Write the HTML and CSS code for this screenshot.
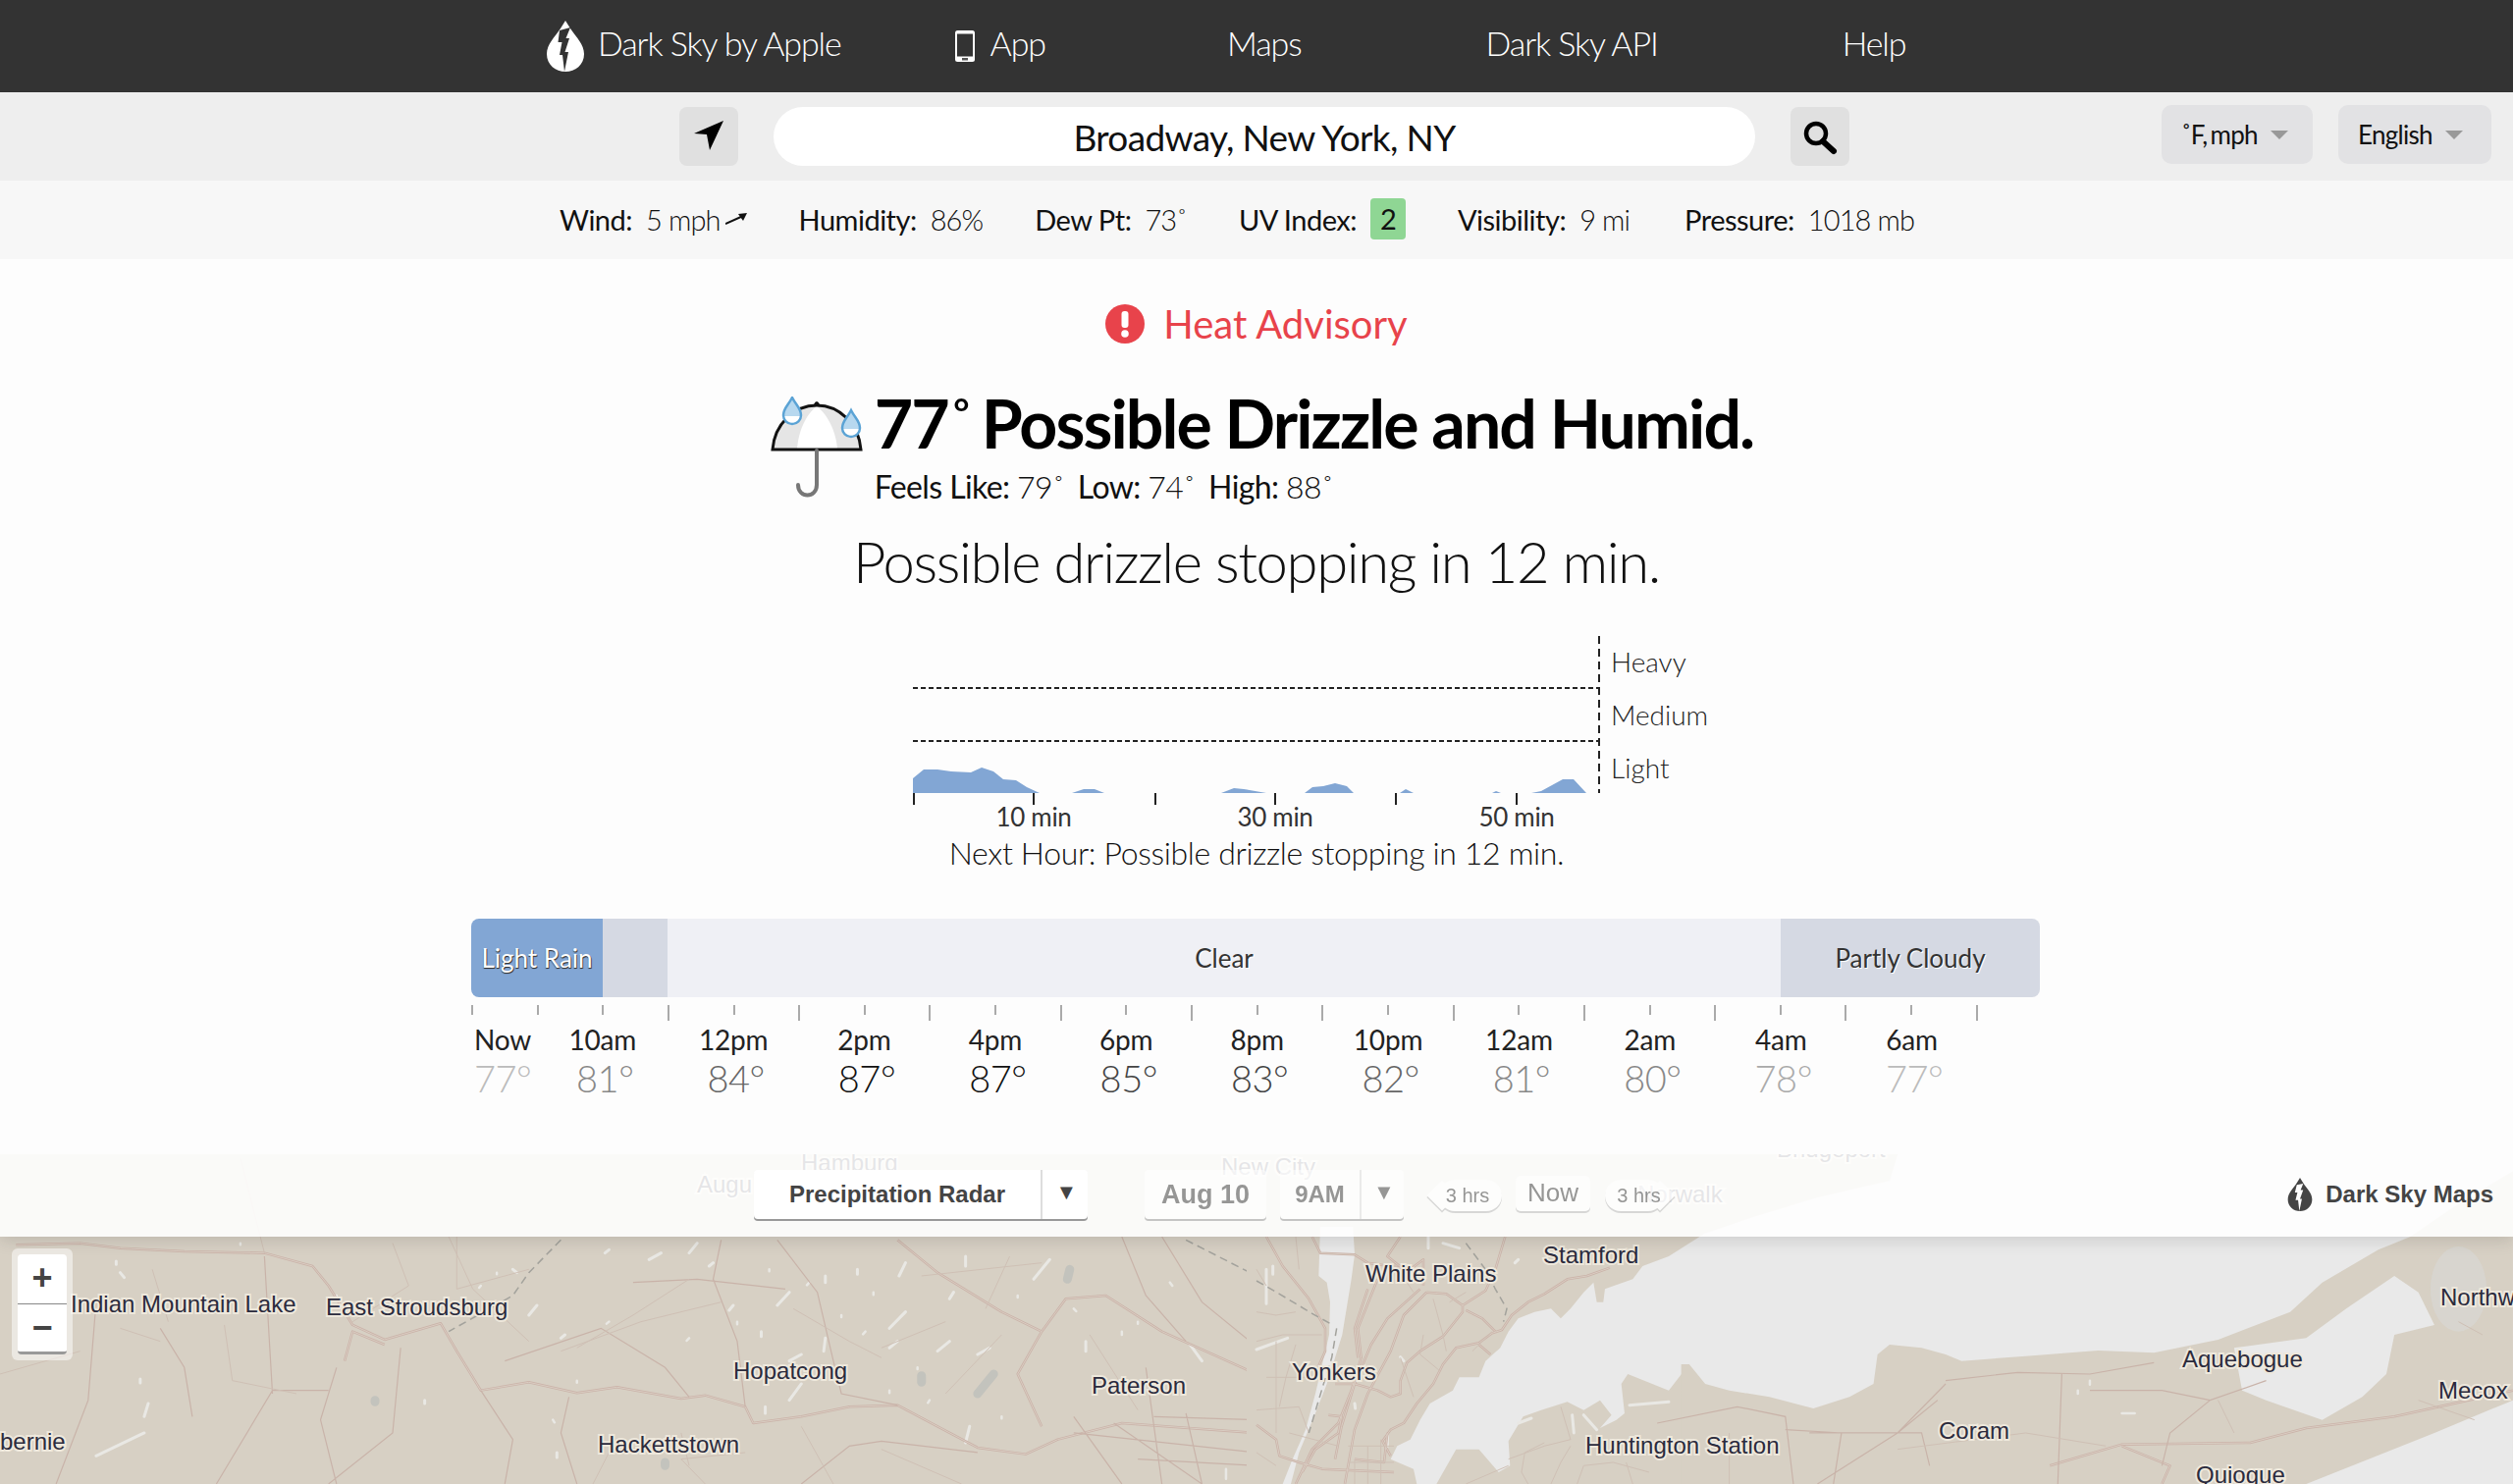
FILE: index.html
```html
<!DOCTYPE html>
<html lang="en">

<head>
  <meta charset="UTF-8">
  <meta name="viewport" content="width=device-width, initial-scale=1.0">
  <title>Dark Sky - Broadway, New York, NY</title>
  <link rel="stylesheet" href="styles.css">
</head>

<body>
  <nav class="topnav">
    <a class="nav-logo">
      <svg class="logo-drop" viewBox="0 0 40 54">
        <path d="M20 1 L25 9 C31 18 39 25 39 35 C39 46 30 53 20 53 C10 53 1 46 1 35 C1 25 9 18 15 9 Z" fill="#fff" />
        <path d="M14 11 L25 8 L20.500 19 L24 19 L19.500 33 L23 33 L19 53 L17 36 L14 36 L16.500 23 L12.500 23 Z" fill="#333" />
      </svg>
      Dark Sky by Apple
    </a>
    <a class="nav-app">
      <svg class="phone" viewBox="0 0 20 32">
        <rect x="0" y="0" width="20" height="32" rx="2.5" fill="#fff" />
        <rect x="2" y="3.5" width="16" height="23" fill="#333" />
        <rect x="7" y="28" width="6" height="2.5" fill="#555" />
      </svg>
      App
    </a>
    <a>Maps</a>
    <a>Dark Sky API</a>
    <a>Help</a>
  </nav>

  <div class="searchbar">
    <button class="icon-btn locate">
      <svg viewBox="0 0 60 60" width="60" height="60">
        <path d="M45 14 L31 44 L28 28 L15 27 Z" fill="#000" />
      </svg>
    </button>
    <div class="location">Broadway, New York, NY</div>
    <button class="icon-btn search">
      <svg viewBox="0 0 60 60" width="60" height="60">
        <circle cx="26" cy="27" r="10" fill="none" stroke="#000" stroke-width="4.5" />
        <path d="M33 35 L44 45" stroke="#000" stroke-width="6" stroke-linecap="round" />
      </svg>
    </button>
    <div class="select-pill units">˚F, mph <span class="caret"></span></div>
    <div class="select-pill lang">English <span class="caret"></span></div>
  </div>

  <div class="stats">
    <div class="stat"><b>Wind:</b> <span>5 mph</span>
      <svg class="wind-arrow" viewBox="0 0 22 12" width="22" height="12">
        <path d="M0 11 L18 3" stroke="#111" stroke-width="2" />
        <path d="M22 0 L13 1 L18 8 Z" fill="#111" />
      </svg>
    </div>
    <div class="stat"><b>Humidity:</b> <span>86%</span></div>
    <div class="stat"><b>Dew Pt:</b> <span>73˚</span></div>
    <div class="stat"><b>UV Index:</b> <span class="uv">2</span></div>
    <div class="stat"><b>Visibility:</b> <span>9 mi</span></div>
    <div class="stat"><b>Pressure:</b> <span>1018 mb</span></div>
  </div>

  <main class="forecast">
    <div class="alert">
      <svg class="alert-icon" viewBox="0 0 40 40">
        <circle cx="20" cy="20" r="20" fill="#e8434b" />
        <rect x="16.5" y="7" width="7" height="17" rx="3" fill="#fff" />
        <circle cx="20" cy="30" r="3.8" fill="#fff" />
      </svg>
      <span>Heat Advisory</span>
    </div>

    <div class="current">
      <svg class="umbrella" viewBox="0 0 94 104">
        <path d="M2 54 C4 28 24 9 47 9 C70 9 90 28 92 54 Z" fill="#e5e5e5" />
        <path d="M27 54 C28 36 36 18 47 10 C58 18 67 36 68 54 Z" fill="#fff" />
        <path d="M2 54 C4 28 24 9 47 9 C70 9 90 28 92 54 Z" fill="none" stroke="#111" stroke-width="3" />
        <path d="M44 8 Q47 2 50 8 Z" fill="#111" />
        <path d="M47 55 L47 90 C47 104 28 104 28 90" fill="none" stroke="#777" stroke-width="4" stroke-linecap="round" />
        <path d="M22 1 C26 9 31 12 31 19 C31 24 27 28 22 28 C17 28 13 24 13 19 C13 12 18 9 22 1 Z" fill="#b7d8ef" stroke="#5ba3d5" stroke-width="2.5" />
        <path d="M14.5 20 H29.5 C29 24 26 26.5 22 26.5 C18 26.5 15 24 14.5 20 Z" fill="#fff" />
        <path d="M82 14 C86 22 91 25 91 32 C91 37 87 41 82 41 C77 41 73 37 73 32 C73 25 78 22 82 14 Z" fill="#b7d8ef" stroke="#5ba3d5" stroke-width="2.5" />
        <path d="M74.500 33 H89.500 C89 37 86 39.500 82 39.500 C78 39.500 75 37 74.500 33 Z" fill="#fff" />
      </svg>
      <div class="current-text">
        <h1><span class="temp">77<i>˚</i> </span>Possible Drizzle and Humid.</h1>
        <div class="feels">
          <b>Feels Like:</b> <span>79˚</span>
          <b>Low:</b> <span>74˚</span>
          <b>High:</b> <span>88˚</span>
        </div>
      </div>
    </div>

    <h2 class="next-summary">Possible drizzle stopping in 12 min.</h2>

    <svg class="rain-chart" viewBox="930 648 800 195" width="800" height="195">
      <path class="rain" d="M930 793 L941 784 L955 784 L969 786 L989 787 L1000 782 L1012 786 L1022 794 L1035 795 L1046 802 L1059 808 L930 808 Z" />
      <path class="rain" d="M1092 808 L1104 804 L1115 804 L1125 808 Z" />
      <path class="rain" d="M1244 808 L1257 803 L1267 804 L1290 808 Z" />
      <path class="rain" d="M1329 808 L1337 802 L1348 801 L1360 798 L1372 801 L1379 808 Z" />
      <path class="rain" d="M1426 808 L1432 804 L1440 808 Z" />
      <path class="rain" d="M1520 808 L1524 806 L1529 808 Z" />
      <path class="rain" d="M1560 808 L1570 806 L1592 794 L1603 794 L1616 808 Z" />
      <path class="dash" d="M930 701 H1629 M930 755 H1629" />
      <path class="dash vert" d="M1629 648 V808" />
      <path class="tick" d="M931 808 V820 M1053 808 V820 M1177 808 V820 M1299 808 V820 M1422 808 V820 M1545 808 V820" />
      <text class="level" x="1641" y="685">Heavy</text>
      <text class="level" x="1641" y="739">Medium</text>
      <text class="level" x="1641" y="793">Light</text>
      <text class="mins" x="1053" y="842">10 min</text>
      <text class="mins" x="1299" y="842">30 min</text>
      <text class="mins" x="1545" y="842">50 min</text>
    </svg>
    <p class="next-hour">Next Hour: Possible drizzle stopping in 12 min.</p>

    <div class="timeline">
      <div class="bar">
        <div class="seg rain-seg">Light Rain</div>
        <div class="seg cloud-seg drizzle-seg"></div>
        <div class="seg clear-seg">Clear</div>
        <div class="seg cloud-seg partly-seg">Partly Cloudy</div>
      </div>
      <div class="ticks">
        <i></i><i></i><i></i>
        <i class="long"></i><i></i><i class="long"></i><i></i><i class="long"></i><i></i><i class="long"></i><i></i>
        <i class="long"></i><i></i><i class="long"></i><i></i><i class="long"></i><i></i><i class="long"></i><i></i>
        <i class="long"></i><i></i><i class="long"></i><i></i><i class="long"></i>
      </div>
      <div class="hours">
        <div class="hour first"><b>Now</b><span class="t1">77°</span></div>
        <div class="hour"><b>10am</b><span class="t3">81°</span></div>
        <div class="hour"><b>12pm</b><span class="t4">84°</span></div>
        <div class="hour"><b>2pm</b><span class="t6">87°</span></div>
        <div class="hour"><b>4pm</b><span class="t6">87°</span></div>
        <div class="hour"><b>6pm</b><span class="t5">85°</span></div>
        <div class="hour"><b>8pm</b><span class="t5">83°</span></div>
        <div class="hour"><b>10pm</b><span class="t4">82°</span></div>
        <div class="hour"><b>12am</b><span class="t3">81°</span></div>
        <div class="hour"><b>2am</b><span class="t3">80°</span></div>
        <div class="hour"><b>4am</b><span class="t2">78°</span></div>
        <div class="hour"><b>6am</b><span class="t1">77°</span></div>
      </div>
    </div>
  </main>

  <section class="map">
    <svg class="map-canvas" viewBox="0 1176 2560 336" width="2560" height="336">
      <defs>
        <path id="roads-west" d="M20 325 L100 320 L150 335 L230 345 L330 350 L390 390 L410 450 L440 570 L480 615 L550 565 L570 650 L600 770 L660 745 L720 778 L770 760 L850 795 L880 785 L930 820 L940 870 L1000 850 L1060 820 L1120 815 L1170 880 L1220 945 L1280 965 L1320 920 L1400 870 L1568 900 M430 680 L440 590 L480 630 M1120 310 L1170 410 L1250 530 L1300 590 L1270 720 L1300 880 M1300 590 L1330 490 L1380 480 L1450 590 L1568 720" />
        <path id="roads-sound" d="M170 0 L195 50 L300 55 L340 80 L470 100 L510 70 L510 150 M520 170 L580 175 L630 210 L630 230 L570 305 L500 350 L460 385 L440 440 L440 480 L410 490 L370 470 L300 450 L240 450 M1080 95 L1010 120 L950 130 L880 175 L830 200 L780 240 L750 285 L720 295 L680 325 L610 340 L570 390 L540 450 L490 510 L450 570 L410 590 L385 625 L410 670 M630 210 L700 165 L730 100 L760 0 M640 225 L690 250 L730 290 M680 330 L715 360 M520 170 L450 240 L410 350 L340 480 L300 590 L270 756 M500 160 L400 250 L350 330 L300 450 L260 580 L240 680 M370 130 L310 280 L320 370 L290 470 L250 570 L170 650 L120 756 M340 160 L300 280 L310 370 M30 0 L80 90 L160 190 L210 280 L210 350 L170 440 M0 575 L60 620 L70 670 L130 690 L200 710 L300 715 L420 720 M220 545 L260 550 L250 600 L180 650 L140 720 M300 680 L390 690 L400 600 M440 0 L400 60 L450 100" />
        <path id="roads-island" d="M990 1000 L1080 935 L1240 930 L1310 885 L1420 850 L1568 770 M1080 940 L1140 1000 L1130 1056" />
      </defs>

      <rect class="water" x="0" y="1176" width="2560" height="336" />
      <rect class="land" x="0" y="1176" width="1290" height="336" />

      <!-- left part of the map -->
      <g transform="translate(0 1160) scale(.8163 .3333)">
        <path class="lake" d="M825 350 l-15 20 M1130 380 l-8 40 M985 470 l-15 40 M1130 530 l-20 50 M1355 620 l0 30 M1210 880 l-5 50 M955 820 l0 20 M1000 750 l-15 50 M175 735 l0 12 M185 810 l-5 40 M180 900 l-60 70 M1030 420 l0 20 M1205 360 l0 30 M1310 370 l-20 60 M1190 470 l-5 20 M1110 640 l10 -20 M1170 650 l15 -30 M1030 610 l-2 40 M1000 660 l-15 20 M1220 660 l15 -20 M150 410 l5 15 M145 375 l0 10 M760 340 l-5 10 M870 320 l-10 30 M640 400 l5 10 M700 610 l5 -10 M670 510 l-10 30 M530 800 l0 10 M695 960 l0 15 M915 510 l-5 15 M950 590 l0 15 M1070 400 l0 15 M890 380 l-5 10 M1500 680 l-15 -50" />
        <path class="lake small" d="M1090 470 l0 8 M1010 440 l-3 8 M960 400 l0 6 M920 560 l0 8 M860 610 l-3 8 M1050 540 l0 6 M1080 590 l-3 8 M1145 700 l0 5 M1270 480 l0 6 M1340 520 l3 8 M1400 590 l0 10 M1460 440 l3 10 M1420 560 l0 6 M760 560 l-3 6 M620 410 l0 5 M600 450 l-2 6 M720 740 l0 6 M690 860 l2 8 M1110 770 l0 8 M1160 800 l-2 8 M1250 850 l0 6 M1530 1010 l0 30 M300 320 l0 5 M420 480 l0 5" />
        <path class="lake grey" d="M1335 400 l-3 30 M1240 720 l-20 60 M1150 725 l0 20 M468 800 l0 5 M830 990 l0 10" />
        <use class="road-case" href="#roads-west" />
        <use class="road-core" href="#roads-west" />
        <path class="road" d="M420 700 L400 860 L420 1056 M600 770 L640 920 L630 1056 M970 310 L1020 470 L1040 680 L1050 780 L1120 815 M900 310 L890 430 L920 620 L930 820 M1000 1056 L1060 940 L1100 925 L1220 960 M120 500 L110 800 L70 1056 M200 580 L230 700 L240 850 M330 360 L340 780 M270 1056 L340 770 L410 770 M630 680 L750 580 L830 700 L860 790 M790 440 L870 430 L980 460 M500 640 L490 900 L410 1056 M710 790 L700 900 L720 1056 M1340 850 L1400 1056 M1430 700 L1450 1056 M1480 840 L1500 1056 M1400 300 L1430 480 L1480 620 M1450 300 L1500 500 L1560 620 M1340 900 L1568 960 M1390 870 L1500 1056 M1420 980 L1568 1000 M1440 850 L1568 860" />
        <path class="road thin" d="M300 60 L330 350 M570 300 L570 460 L660 400 M700 650 L800 560 L900 500 M990 520 L1060 620 L1100 670 M150 580 L200 620 M1150 420 L1300 380 M1250 600 L1180 780 M850 900 L860 1000 M1100 950 L1200 1056 M100 650 L0 720 M1360 600 L1420 830 M490 320 L510 450 L440 560 M190 400 L210 560 M280 570 L290 740 L370 780 M720 640 L790 540 L860 430 M1000 880 L1040 1056 M880 1056 L850 980 L930 960 M1260 360 L1230 520 M560 300 L590 460 L660 620 M1180 560 L1100 640 M740 1056 L760 960 L850 920" />
        <path class="border" d="M700 310 L660 410 L640 480 L560 590" />
        <path class="border" d="M1480 310 L1568 420" />
      </g>

      <!-- sound and hudson, traced at 3x from the top left of this group -->
      <g transform="translate(1280 1260) scale(.3333)">
        <path class="land" d="M-30 -252 L1960 -252 L1935 -171 L1714 -120 L1518 -60 L1370 -10 L1260 60 L1180 90 L1150 130 L1065 160 L1060 200 L1040 200 L1030 140 L1000 170 L960 220 L930 250 L900 220 L850 230 L800 250 L770 290 L745 340 L700 380 L680 430 L620 430 L600 470 L530 510 L500 560 L470 620 L430 640 L410 680 L480 710 L490 756 L-30 756 Z" />
        <path class="land" d="M550 756 L610 650 L680 650 L740 720 L775 700 L770 625 L815 550 L870 530 L950 505 L1000 530 L1050 500 L1085 545 L1050 585 L1100 560 L1125 540 L1115 450 L1135 420 L1260 470 L1322 390 L1322 756 Z" />
        <path class="water" d="M195 -30 L295 -30 L300 55 L290 130 L262 300 L215 450 L180 540 L130 660 L105 756 L80 756 L110 680 L150 590 L180 480 L222 300 L225 200 L215 140 L190 120 Z" />
        <path class="lake" d="M30 100 L30 205 M50 90 L50 115 M0 345 L95 310 M525 0 L525 35 M570 20 L620 35 M300 510 L302 525 M400 610 L400 640 M440 368 L450 380 M965 545 L970 600 M1000 545 L1040 590 M1140 515 L1260 505 M800 570 L840 555 M800 70 L790 80" />
        <use class="road-case" href="#roads-sound" />
        <use class="road-core" href="#roads-sound" />
        <path class="road thin" d="M0 230 L60 240 L120 230 M30 430 L170 430 M60 320 L60 600 M0 530 L130 520 L160 600 M0 320 L80 300 L200 300 M120 0 L130 100 M540 190 L570 300 L580 350 M480 490 L440 370 M510 300 L500 360 L560 410 M660 350 L720 290 M280 640 L420 640 M300 680 L300 756 M340 640 L340 756 M380 620 L380 756 M280 690 L420 690 M100 600 L250 640 M0 660 L60 700 M480 170 L420 80 M590 200 L640 170 M880 630 L820 660 L810 720 L830 756 M770 680 L880 640 L960 620 L930 520 M960 640 L930 690 L900 756 M1000 700 L1090 690 L1200 720 M1200 640 L1260 620 M640 756 L770 700 M1000 700 L980 756 M1130 690 L1150 756 M0 100 L30 150 M120 330 L90 430 L70 520" />
        <path class="border" d="M0 135 L70 175 L170 235 L230 268 M245 280 L230 370 L205 450 L175 550 L160 600 M640 20 L700 100 L730 160 L765 220 L755 260" />
      </g>

      <!-- long island, forks and the top of the map to the east -->
      <g transform="translate(1280 1160) scale(.8163 .3333)">
        <path class="land" d="M530 690 L540 690 L560 750 L590 770 L640 790 L695 825 L740 790 L770 750 L775 660 L790 630 L830 640 L860 660 L880 680 L960 665 L1050 648 L1120 655 L1200 615 L1290 530 L1330 440 L1400 340 L1440 300 L1470 250 L1500 200 L1568 100 L1568 1056 L530 1056 Z" />
        <path class="water" d="M1220 640 L1310 610 L1360 520 L1420 420 L1450 470 L1470 570 L1420 600 L1410 720 L1380 790 L1330 860 L1260 800 L1230 770 Z" />
        <path class="water" d="M1310 1056 L1470 900 L1568 800 L1568 1056 Z" />
        <ellipse class="haze" cx="1500" cy="460" rx="35" ry="130" />
        <use class="road-case" href="#roads-island" />
        <use class="road-core" href="#roads-island" />
        <path class="road" d="M860 740 L950 715 L1040 720 L1120 685 M1005 720 L1000 1056 M850 800 L800 900 L830 900 L840 1000 M690 900 L800 900 M1190 800 L1140 900 L1130 1000 M500 870 L600 820 L660 850 L670 1056 M660 890 L730 900 L720 1056 M860 750 L800 900 L700 1056 M1040 770 L1130 770 L1190 800 L1260 740" />
        <path class="road thin" d="M800 950 L960 900 L1060 940 M590 1056 L590 900 M1200 800 L1220 900 M1500 560 L1530 600 M1450 800 L1520 860" />
        <path class="lake small" d="M1040 740 l0 12 M1080 840 l16 0 M1025 770 l0 10 M1500 500 l0 8" />
      </g>

      <g class="labels">
        <text x="816" y="1193" class="under">Hamburg</text>
        <text x="710" y="1215" class="under">Augu</text>
        <text x="1244" y="1197" class="under">New City</text>
        <text x="1810" y="1179" class="under">Bridgeport</text>
        <text x="1668" y="1225" class="under">Norwalk</text>
        <text x="72" y="1337">Indian Mountain Lake</text>
        <text x="332" y="1340">East Stroudsburg</text>
        <text x="747" y="1405">Hopatcong</text>
        <text x="1112" y="1420">Paterson</text>
        <text x="609" y="1480">Hackettstown</text>
        <text x="0" y="1477">bernie</text>
        <text x="1572" y="1287">Stamford</text>
        <text x="1391" y="1306">White Plains</text>
        <text x="1316" y="1406">Yonkers</text>
        <text x="2223" y="1393">Aquebogue</text>
        <text x="2486" y="1330">Northw</text>
        <text x="2484" y="1425">Mecox</text>
        <text x="1975" y="1466">Coram</text>
        <text x="1615" y="1481">Huntington Station</text>
        <text x="2237" y="1511">Quiogue</text>
      </g>
    </svg>

    <div class="map-bar">
      <div class="map-select layer">
        <span class="select-text">Precipitation Radar</span>
        <span class="select-arrow">▼</span>
      </div>
      <div class="time-controls">
        <div class="map-select date"><span class="select-text">Aug 10</span></div>
        <div class="map-select clock">
          <span class="select-text">9AM</span>
          <span class="select-arrow">▼</span>
        </div>
        <div class="step back">3 hrs</div>
        <div class="step now">Now</div>
        <div class="step forward">3 hrs</div>
      </div>
      <div class="map-brand">
        <svg class="brand-drop" viewBox="0 0 40 54">
          <path d="M20 1 L25 9 C31 18 39 25 39 35 C39 46 30 53 20 53 C10 53 1 46 1 35 C1 25 9 18 15 9 Z" fill="#444" />
          <path d="M15 12 L25 10 L21 20 L25 20 L20 34 L23 34 L19 53 L17 36 L13 36 L16 24 L12 24 Z" fill="#fff" />
        </svg>
        Dark Sky Maps
      </div>
    </div>

    <div class="zoom-box">
      <div class="zoom-btn">+</div>
      <div class="zoom-btn">−</div>
    </div>
  </section>
</body>

</html>
```

FILE: styles.css
```css
* {
  box-sizing: border-box;
}

html,
body {
  margin: 0;
  height: 1512px;
  overflow: hidden;
}

body {
  font-family: Lato, "Open Sans", sans-serif;
  background-color: #fdfdfd;
  color: #111;
}

/* top navigation */
.topnav {
  display: flex;
  align-items: center;
  height: 94px;
  padding-left: 556px;
  padding-bottom: 8px;
  gap: 188px;
  background-color: #333;
  color: #fff;
  font-size: 34px;
  font-weight: 300;
  letter-spacing: -1.1px;
}

.nav-logo {
  display: flex;
  align-items: center;
  gap: 13px;
  margin-right: -72px;
}

.logo-drop {
  width: 40px;
  height: 54px;
  margin-top: 8px;
}

.nav-app {
  display: flex;
  align-items: center;
  gap: 16px;
  margin-right: -3px;
}

.phone {
  width: 20px;
  height: 32px;
  margin-top: 8px;
}

/* search row */
.searchbar {
  display: flex;
  align-items: center;
  height: 90px;
  padding-left: 692px;
  background-color: #eee;
}

.icon-btn {
  width: 60px;
  height: 60px;
  padding: 0;
  border: none;
  border-radius: 8px;
  background-color: #e0e0e0;
}

.location {
  width: 1000px;
  height: 60px;
  margin: 0 36px;
  border-radius: 30px;
  background-color: #fff;
  font-size: 37px;
  letter-spacing: -0.65px;
  line-height: 62px;
  text-align: center;
}

.select-pill {
  display: flex;
  align-items: center;
  gap: 13px;
  height: 60px;
  margin-top: -4px;
  padding-left: 20px;
  border-radius: 10px;
  background-color: #e2e2e4;
  font-size: 26px;
  letter-spacing: -0.7px;
}

.units {
  width: 154px;
  margin-left: 318px;
  word-spacing: -3px;
}

.lang {
  width: 156px;
  margin-left: 26px;
}

.caret {
  border-top: 9px solid #999;
  border-left: 9px solid transparent;
  border-right: 9px solid transparent;
}

/* current conditions strip */
.stats {
  display: flex;
  align-items: center;
  justify-content: center;
  gap: 53px;
  height: 80px;
  padding-right: 40px;
  padding-bottom: 2px;
  background-color: #f7f7f7;
  font-size: 29px;
  letter-spacing: -0.5px;
}

.stat {
  display: flex;
  align-items: center;
  gap: 14px;
}

.stat:last-child {
  margin-left: 3px;
}

.stat b {
  font-weight: 400;
}

.stat span {
  font-weight: 300;
  letter-spacing: -0.9px;
}

.wind-arrow {
  margin-left: -9px;
}

.stat .uv {
  width: 36px;
  height: 42px;
  border-radius: 4px;
  background-color: #8fd694;
  font-weight: 400;
  line-height: 42px;
  text-align: center;
}

/* forecast */
.forecast {
  display: flex;
  flex-direction: column;
  align-items: center;
  height: 912px;
}

.alert {
  display: flex;
  align-items: center;
  gap: 19px;
  margin-top: 42px;
  color: #e8434b;
  font-size: 40px;
}

.alert-icon {
  width: 40px;
  height: 40px;
}

.current {
  display: flex;
  gap: 12px;
  margin-top: 33px;
  margin-left: 11px;
}

.umbrella {
  width: 94px;
  height: 104px;
  margin-top: 17px;
}

.current-text h1 {
  margin: 0;
  color: #000;
  font-size: 68px;
  font-weight: 700;
  letter-spacing: -1.9px;
  line-height: 87px;
}

.temp {
  word-spacing: -6px;
}

.temp i {
  font-style: normal;
  font-weight: 400;
}

.feels {
  margin-top: 2px;
  font-size: 32px;
  letter-spacing: -0.6px;
  line-height: 40px;
}

.feels b {
  font-weight: 400;
}

.feels span {
  margin-right: 6px;
  font-weight: 300;
}

.next-summary {
  margin: 21px 0 0;
  font-size: 58px;
  font-weight: 300;
  letter-spacing: -1.4px;
  line-height: 70px;
}

.rain-chart {
  display: block;
  margin: 41px 0 0 100px;
  overflow: visible;
}

.rain {
  fill: #82a6d4;
}

.dash {
  fill: none;
  stroke: #222;
  stroke-width: 2;
  stroke-dasharray: 5 3;
}

.dash.vert {
  stroke-dasharray: 8 5;
}

.tick {
  stroke: #222;
  stroke-width: 2;
}

.level {
  font-size: 28px;
  font-weight: 300;
  fill: #222;
}

.mins {
  font-size: 26px;
  letter-spacing: -0.3px;
  fill: #333;
  text-anchor: middle;
}

.next-hour {
  margin: 6px 0 0;
  font-size: 32px;
  font-weight: 300;
  letter-spacing: -0.35px;
  line-height: 40px;
}

/* hour by hour */
.timeline {
  width: 1598px;
  margin-top: 47px;
  margin-left: -2px;
}

.bar {
  display: flex;
  height: 80px;
  border-radius: 8px;
  overflow: hidden;
  font-size: 26px;
  line-height: 80px;
  text-align: center;
  color: #333;
}

.seg {
  text-shadow: 1px 1px 0 #fff;
}

.rain-seg {
  width: 134px;
  background-color: #82a6d4;
  color: #fff;
  text-shadow: 0 1px 1px #333, 1px 1px 0 #555;
}

.drizzle-seg {
  width: 66px;
}

.cloud-seg {
  background-color: #d5d9e3;
}

.clear-seg {
  width: 1134px;
  background-color: #eff0f5;
}

.partly-seg {
  width: 264px;
}

.ticks {
  display: flex;
  justify-content: space-between;
  align-items: flex-start;
  width: 1535px;
  margin-top: 8px;
}

.ticks i {
  width: 2px;
  height: 10px;
  background-color: #aaa;
}

.ticks i.long {
  height: 16px;
}

.hours {
  display: flex;
  margin-top: 0;
}

.hour {
  display: flex;
  flex-direction: column;
  align-items: center;
  width: 133.4px;
  flex: none;
}

.hour.first {
  width: 67px;
  align-items: flex-start;
  padding-left: 3px;
}

.hour b {
  font-size: 28px;
  font-weight: 400;
  letter-spacing: -0.2px;
  line-height: 38px;
  color: #222;
}

.hour span {
  padding-left: 5px;
  font-size: 38px;
  font-weight: 300;
  letter-spacing: -0.5px;
  line-height: 40px;
}

.hour.first span {
  padding-left: 0;
}

.t1 {
  color: #bbb;
}

.t2 {
  color: #aaa;
}

.t3 {
  color: #888;
}

.t4 {
  color: #666;
}

.t5 {
  color: #444;
}

.t6 {
  color: #111;
}

/* map */
.map {
  position: relative;
  height: 336px;
  overflow: hidden;
}

.map-canvas {
  display: block;
}

.land {
  fill: #d7d0c4;
}

.water {
  fill: #e9e9e9;
}

.haze {
  fill: #d9dfe5;
  opacity: 0.35;
}

.map-canvas path {
  vector-effect: non-scaling-stroke;
}

.road,
.road-case,
.road-core,
.lake,
.border {
  fill: none;
}

.road {
  stroke: #c9b3a9;
  stroke-width: 1.2;
}

.road.thin {
  stroke: #cfc0b5;
  stroke-width: 1;
}

.road-case {
  stroke: #cbb3a9;
  stroke-width: 2.5;
  stroke-linejoin: round;
}

.road-core {
  stroke: #d9cdc2;
  stroke-width: 1;
  stroke-linejoin: round;
}

.lake {
  stroke: #e9e8e4;
  stroke-width: 3;
  stroke-linecap: round;
}

.lake.small {
  stroke-width: 2.5;
}

.lake.grey {
  stroke: #c3c3bd;
  stroke-width: 9;
}

.border {
  stroke: #a3a29c;
  stroke-width: 1.5;
  stroke-dasharray: 8 5;
}

.labels text {
  font-family: "Liberation Sans", Arial, sans-serif;
  font-size: 24px;
  fill: #2b2b3d;
  stroke: #eee8dc;
  stroke-width: 4;
  paint-order: stroke;
}

.map-bar {
  position: absolute;
  top: 0;
  left: 0;
  right: 0;
  display: flex;
  align-items: flex-start;
  height: 84px;
  padding: 16px 20px 0 768px;
  background-color: rgba(255, 255, 255, 0.88);
  box-shadow: 0 4px 16px rgba(0, 0, 0, 0.12);
  font-family: "Liberation Sans", Arial, sans-serif;
  font-weight: 700;
  color: #444;
}

.map-select {
  display: flex;
  align-items: center;
  height: 50px;
  border-radius: 4px;
  background-color: #fff;
  box-shadow: 0 2px 0 #999;
  font-size: 24px;
}

.layer {
  width: 340px;
}

.layer .select-text {
  width: 292px;
  padding-left: 36px;
}

.select-text {
  line-height: 48px;
}

.select-arrow {
  flex: 1;
  height: 100%;
  padding-left: 3px;
  border-left: 2px solid #ddd;
  font-size: 22px;
  line-height: 46px;
  text-align: center;
}

.time-controls {
  display: flex;
  align-items: flex-start;
  margin-left: 58px;
  opacity: 0.55;
}

.date {
  justify-content: center;
  width: 124px;
  font-size: 27px;
}

.clock {
  width: 126px;
  margin-left: 14px;
}

.clock .select-text {
  width: 81px;
  text-align: center;
}

.step {
  position: relative;
  height: 32px;
  margin-top: 10px;
  border-radius: 16px;
  background-color: #fff;
  filter: drop-shadow(0 2px 0 #bbb);
  font-size: 20px;
  font-weight: 400;
  line-height: 32px;
  text-align: center;
}

.back::before,
.forward::before {
  content: "";
  position: absolute;
  top: 5px;
  width: 22px;
  height: 22px;
  background-color: #fff;
  transform: rotate(45deg);
  z-index: -1;
}

.back {
  width: 64px;
  margin-left: 36px;
  padding-right: 6px;
}

.back::before {
  left: -8px;
}

.forward {
  width: 60px;
  padding-left: 9px;
}

.forward::before {
  right: -7px;
}

.now {
  width: 76px;
  height: 36px;
  margin: 6px 15px 0 14px;
  border-radius: 5px;
  font-size: 26px;
  line-height: 34px;
}

.map-brand {
  display: flex;
  align-items: center;
  gap: 13px;
  margin-left: auto;
  height: 50px;
  font-size: 24px;
}

.brand-drop {
  width: 26px;
  height: 36px;
}

.zoom-box {
  position: absolute;
  top: 96px;
  left: 12px;
  width: 62px;
  padding: 6px 6px;
  border-radius: 6px;
  background-color: rgba(255, 255, 255, 0.5);
}

.zoom-btn {
  height: 51px;
  background-color: #fff;
  font-family: "Liberation Sans", Arial, sans-serif;
  font-size: 36px;
  font-weight: 700;
  line-height: 48px;
  text-align: center;
  color: #444;
  border-bottom: 1px solid #888;
}

.zoom-btn:first-child {
  border-radius: 4px 4px 0 0;
}

.zoom-btn:last-child {
  border-radius: 0 0 4px 4px;
  border-bottom: 3px solid #999;
}
```
